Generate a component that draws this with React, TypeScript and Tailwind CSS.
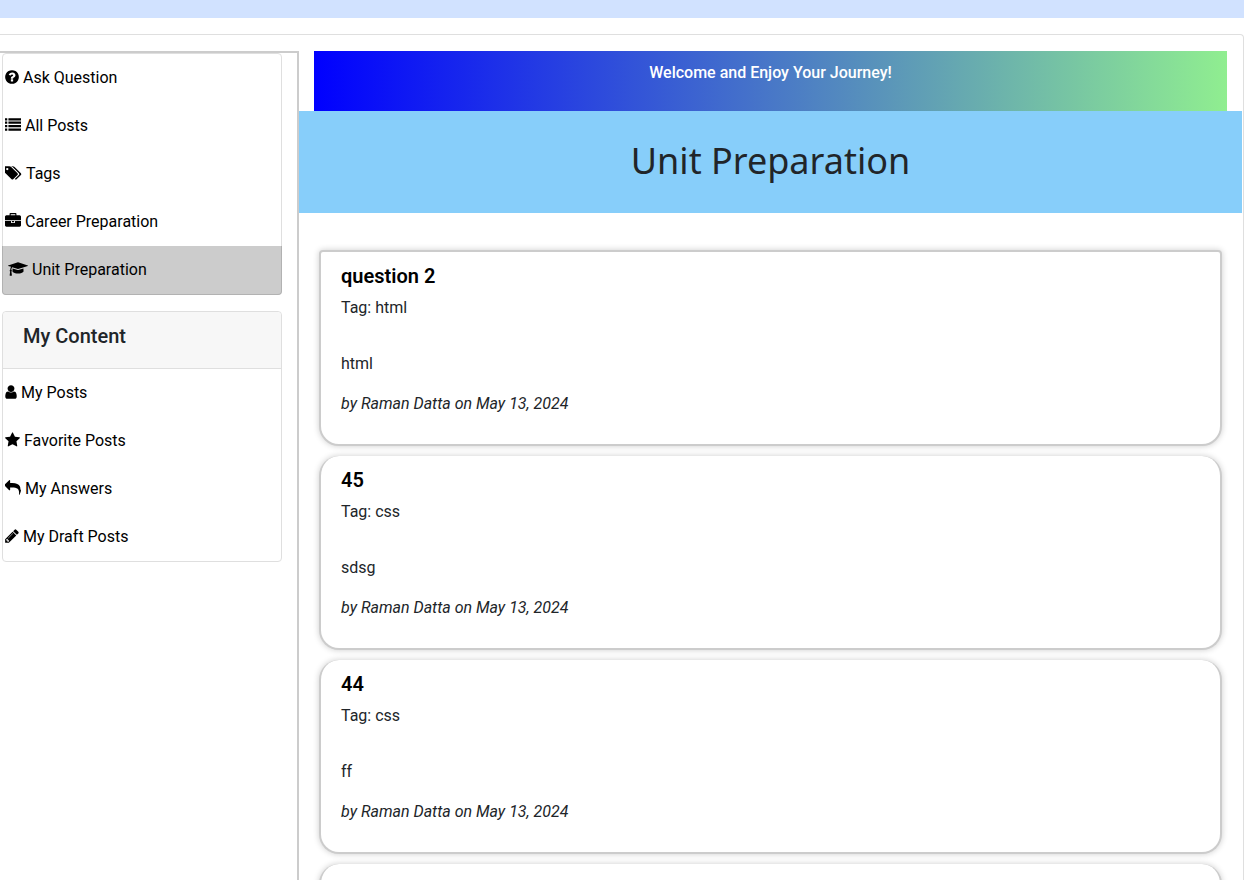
import type { ReactNode } from "react";

type Glyph = { viewBox: string; size: string; path: string };

const glyphs: Record<string, Glyph> = {
  question: {
    viewBox: "128 0 1536 1792",
    size: "w-3.5",
    path: "M1024 1376v-192q0-14-9-23t-23-9h-192q-14 0-23 9t-9 23v192q0 14 9 23t23 9h192q14 0 23-9t9-23zm256-672q0-88-55.5-163t-138.5-116-170-41q-243 0-371 213-15 24 8 42l132 100q7 6 19 6 16 0 25-12 53-68 86-92 34-24 86-24 48 0 85.5 26t37.5 59q0 38-20 61t-68 45q-63 28-115.5 86.5t-52.5 125.5v36q0 14 9 23t23 9h192q14 0 23-9t9-23q0-19 21.5-49.5t54.5-49.5q32-18 49-28.5t46-35 44.5-48 28-60.5 12.5-81zm384 192q0 209-103 385.5t-279.5 279.5-385.5 103-385.5-103-279.5-279.5-103-385.5 103-385.5 279.5-279.5 385.5-103 385.5 103 279.5 279.5 103 385.5z",
  },
  list: {
    viewBox: "0 0 1792 1792",
    size: "w-4",
    path: "M0 128h256v256H0zM0 512h256v256H0zM0 896h256v256H0zM0 1280h256v256H0zM384 128h1408v256H384zM384 512h1408v256H384zM384 896h1408v256H384zM384 1280h1408v256H384z",
  },
  tags: {
    viewBox: "0 0 1920 1792",
    size: "w-[17px]",
    path: "M384 448q0-53-37.5-90.5t-90.5-37.5-90.5 37.5-37.5 90.5 37.5 90.5 90.5 37.5 90.5-37.5 37.5-90.5zm1067 576q0 53-37 90l-491 492q-39 37-91 37-53 0-90-37l-715-716q-38-37-64.5-101t-26.5-117v-416q0-52 38-90t90-38h416q53 0 117 26.5t102 64.5l715 714q37 39 37 91zm384 0q0 53-37 90l-491 492q-39 37-91 37-36 0-59-14t-53-45l470-470q37-37 37-90 0-52-37-91l-715-714q-38-38-102-64.5t-117-26.5h224q53 0 117 26.5t102 64.5l715 714q37 39 37 91z",
  },
  briefcase: {
    viewBox: "0 0 1792 1792",
    size: "w-4",
    path: "M640 256h512v-128h-512v128zm1152 640v480q0 66-47 113t-113 47h-1472q-66 0-113-47t-47-113v-480h672v160q0 26 19 45t45 19h320q26 0 45-19t19-45v-160h672zm-768 0v128h-256v-128h256zm768-480v384h-1792v-384q0-66 47-113t113-47h352v-160q0-40 28-68t68-28h576q40 0 68 28t28 68v160h352q66 0 113 47t47 113z",
  },
  cap: {
    viewBox: "0 0 2304 1792",
    size: "w-5",
    path: "M1774 836l18 316q4 69-82 128t-235 93.5-323 34.5-323-34.5-235-93.5-82-128l18-316 574 181q22 7 48 7t48-7zm530-324q0 23-22 31l-1120 352q-4 1-10 1t-10-1l-652-206q-43 34-71 111.5t-34 178.5q63 36 63 109 0 69-58 107l58 433q2 14-8 25-9 11-24 11h-192q-15 0-24-11-10-11-8-25l58-433q-58-38-58-107 0-73 65-111 11-207 98-330l-333-104q-22-8-22-31t22-31l1120-352q4-1 10-1t10 1l1120 352q22 8 22 31z",
  },
  user: {
    viewBox: "256 0 1280 1792",
    size: "w-3",
    path: "M1536 1399q0 109-62.5 187t-150.5 78h-854q-88 0-150.5-78t-62.5-187q0-85 8.5-160.5t31.5-152 58.5-131 94-89 134.5-34.5q131 128 313 128t313-128q76 0 134.5 34.5t94 89 58.5 131 31.5 152 8.5 160.5zm-256-887q0 159-112.5 271.5t-271.5 112.5-271.5-112.5-112.5-271.5 112.5-271.5 271.5-112.5 271.5 112.5 112.5 271.5z",
  },
  star: {
    viewBox: "64 0 1664 1792",
    size: "w-[15px]",
    path: "M1728 647q0 22-26 48l-363 354 86 500q1 7 1 20 0 21-10.5 35.5t-30.5 14.5q-19 0-40-12l-449-236-449 236q-22 12-40 12-21 0-31.5-14.5t-10.5-35.5q0-6 2-20l86-500-364-354q-25-27-25-48 0-37 56-46l502-73 225-455q19-41 49-41t49 41l225 455 502 73q56 9 56 46z",
  },
  reply: {
    viewBox: "0 0 1792 1792",
    size: "w-4",
    path: "M1792 1120q0 166-127 451-3 7-10.5 24t-13.5 30-13 22q-12 17-28 17-15 0-23.5-10t-8.5-25q0-9 2.5-26.5t2.5-23.5q5-68 5-123 0-112-19.5-200.5t-54-153.5-89-112-117-80-147.5-45.5-168-24.5-184-6h-224v256q0 26-19 45t-45 19-45-19l-512-512q-19-19-19-45t19-45l512-512q19-19 45-19t45 19 19 45v256h224q713 0 875 403 53 134 53 333z",
  },
  pencil: {
    viewBox: "128 0 1536 1792",
    size: "w-3.5",
    path: "M491 1536l91-91-235-235-91 91v107h128v128h107zm523-928q0-22-22-22-10 0-17 7l-542 542q-7 7-7 17 0 22 22 22 10 0 17-7l542-542q7-7 7-17zm-54-192l416 416-832 832h-416v-416zm683 96q0 53-37 90l-166 166-416-416 166-165q36-38 90-38 53 0 91 38l235 234q37 39 37 91z",
  },
};

function Icon({ name }: { name: string }) {
  const g = glyphs[name];
  return (
    <svg viewBox={g.viewBox} className={`mb-0.5 h-4 shrink-0 ${g.size}`} fill="currentColor" aria-hidden="true">
      <path d={g.path} />
    </svg>
  );
}

function NavItem({ icon, children, active = false }: { icon: string; children: ReactNode; active?: boolean }) {
  return (
    <li
      className={
        active
          ? "-mx-px -mb-px rounded-b border border-t-0 border-black/[.125] bg-[#ccc] pl-[3px]"
          : ""
      }
    >
      <a
        href="#"
        aria-current={active ? "page" : undefined}
        className="flex h-12 items-center gap-1 px-0.5 text-black"
      >
        <Icon name={icon} />
        {children}
      </a>
    </li>
  );
}

const posts = [
  { title: "question 2", tag: "html", body: "html" },
  { title: "45", tag: "css", body: "sdsg" },
  { title: "44", tag: "css", body: "ff" },
];

const cardStyle =
  "rounded-b-[20px] border-2 border-[#ccc] bg-white px-5 py-3 shadow-[0_0_6px_rgba(0,0,0,0.2)] not-first:rounded-t-[20px] not-first:border-t-0 first:rounded-t";

export default function App() {
  return (
    <div className="flex h-screen flex-col overflow-hidden bg-white font-[Roboto,sans-serif] text-base text-[#212529]">
      <header className="h-[18px] shrink-0 bg-[#d1e2ff]" />
      <div className="mt-4 flex flex-1 rounded-tr border-t border-r border-[#dfdfdf] pt-4 pr-px">
        <aside className="w-[299px] shrink-0 border-t-2 border-r-2 border-[#ccc] pr-[15px] pl-0.5">
          <nav className="rounded border border-[#dfdfdf]">
            <ul>
              <NavItem icon="question">Ask Question</NavItem>
              <NavItem icon="list">All Posts</NavItem>
              <NavItem icon="tags">Tags</NavItem>
              <NavItem icon="briefcase">Career Preparation</NavItem>
              <NavItem icon="cap" active>Unit Preparation</NavItem>
            </ul>
          </nav>
          <nav className="mt-4 rounded border border-[#dfdfdf]">
            <div className="rounded-t border-b border-[#dfdfdf] bg-[#f7f7f7] px-5 pt-3 pb-5">
              <h2 className="text-xl leading-6 font-medium">My Content</h2>
            </div>
            <ul>
              <NavItem icon="user">My Posts</NavItem>
              <NavItem icon="star">Favorite Posts</NavItem>
              <NavItem icon="reply">My Answers</NavItem>
              <NavItem icon="pencil">My Draft Posts</NavItem>
            </ul>
          </nav>
        </aside>
        <main className="min-w-0 flex-1">
          <div className="mx-[15px] h-[60px] bg-[linear-gradient(to_right,blue,lightgreen)] pt-2.5 text-center leading-6 font-medium text-white">
            Welcome and Enjoy Your Journey!
          </div>
          <h1 className="flex h-[102px] items-center justify-center bg-[#87cefa] pb-0.5 font-['Noto_Sans',sans-serif] text-4xl">
            Unit Preparation
          </h1>
          <ul className="flex flex-col gap-2.5 px-5 pt-[37px]">
            {posts.map((p) => (
              <li key={p.title} className={cardStyle}>
                <h2 className="mb-2 text-xl leading-6 font-semibold text-black">{p.title}</h2>
                <p className="mb-8">Tag: {p.tag}</p>
                <p className="mb-4">{p.body}</p>
                <p className="mb-4 italic">by Raman Datta on May 13, 2024</p>
              </li>
            ))}
            <li className={`min-h-48 ${cardStyle}`} />
          </ul>
        </main>
      </div>
    </div>
  );
}
